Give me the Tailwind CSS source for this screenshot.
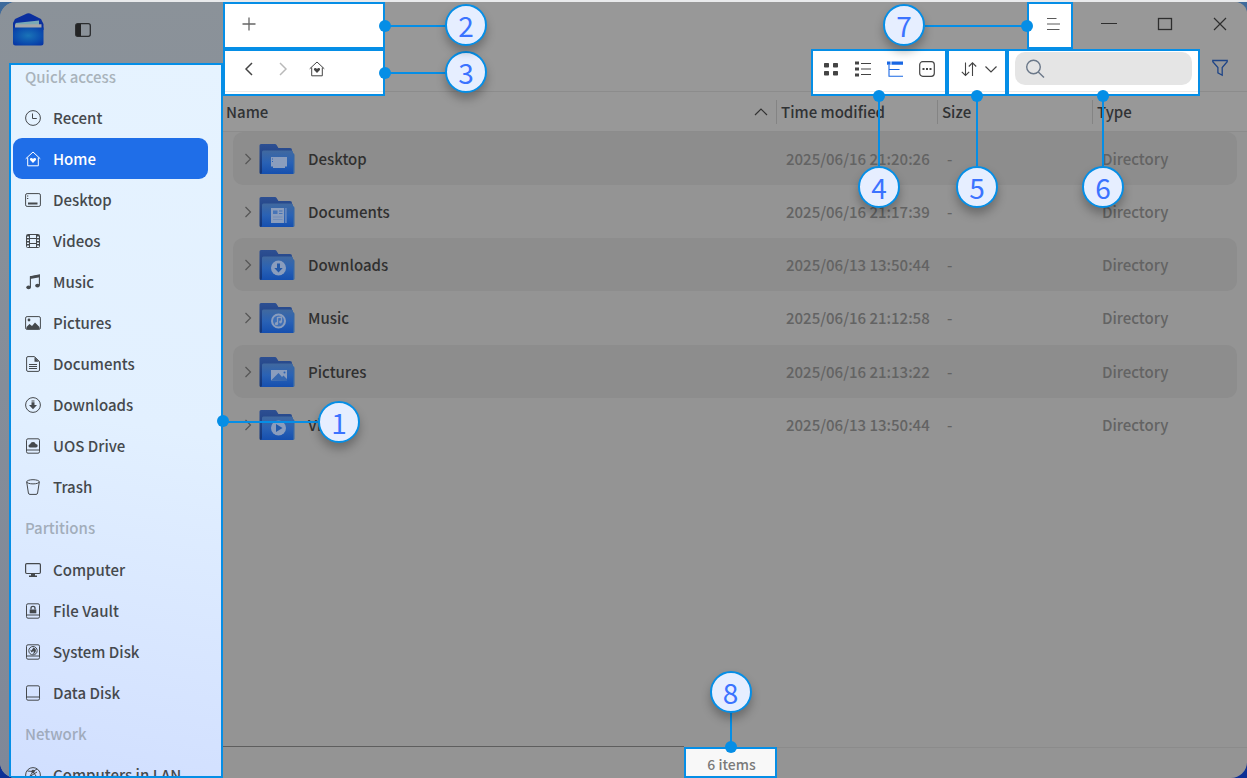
<!DOCTYPE html>
<html lang="en">
<head>
<meta charset="utf-8">
<title>File Manager</title>
<script src="https://cdn.jsdelivr.net/npm/@tailwindcss/browser@4"></script>
</head>
<body class="h-screen overflow-hidden border-t-2 border-[#e9eaec] bg-linear-to-b from-[#3f6b9c] to-[#0c2f96] font-['Noto_Sans_CJK_SC',sans-serif] text-[15px] leading-6 text-[#303234]">

<svg class="absolute size-0" aria-hidden="true">
  <symbol id="home" viewBox="0 0 16 16"><path d="M.7 7.800 8 1l7.300 6.800M2.700 6.500v8.300h10.600V6.500" fill="none" stroke="currentColor"/><path d="M8 11.900 5.300 9.300C4.400 8.300 5 7 6.200 7c.8 0 1.400.4 1.800 1 .4-.6 1-1 1.800-1 1.200 0 1.800 1.300.9 2.300z" fill="currentColor"/></symbol>
  <symbol id="chev" viewBox="0 0 10 14"><path d="m2.500 2 5 5-5 5" fill="none" stroke="currentColor" stroke-width="1.200"/></symbol>
  <symbol id="drive" viewBox="0 0 16 16"><rect x="1.500" y=".8" width="13" height="14.400" rx="1.500" fill="none" stroke="currentColor"/><path d="M1.500 12h13" stroke="currentColor"/></symbol>
  <linearGradient id="fb" x1="0" y1="0" x2="0" y2="1"><stop offset="0" stop-color="#2d4f92"/><stop offset="1" stop-color="#123579"/></linearGradient>
  <linearGradient id="ff" x1="0" y1="0" x2="0" y2="1"><stop offset="0" stop-color="#41699f"/><stop offset=".5" stop-color="#2a62b5"/><stop offset="1" stop-color="#154faf"/></linearGradient>
  <symbol id="folder" viewBox="0 0 36 32"><path d="M.5 2.500Q.5 1 2 1h14q1 0 1.600 1l1.800 3H31q2 0 2 2v24H2Q.5 31 .5 29.500z" fill="url(#fb)"/><path d="M30 10h3.500q2 0 2 2v17.500q0 1.500-1.500 1.500h-4z" fill="#3467a8"/><path d="M3 9q0-1.500 1.500-1.500h28Q34 7.500 34 9v22H2q1-.5 1-2z" fill="url(#ff)"/></symbol>
</svg>

<div class="flex h-full overflow-hidden rounded-2xl rounded-tr-xl bg-[#949494]">

  <!-- Sidebar -->
  <aside class="relative z-10 flex w-[223px] shrink-0 flex-col bg-linear-to-b from-[#8b9299] to-[#7f8898]">
    <header class="flex h-[61px] shrink-0 items-start gap-[30px] pt-2.5 pl-3">
      <svg class="h-[34px] w-8" viewBox="0 0 32 34">
        <defs><radialGradient id="lg" cx=".5" cy=".45" r=".7"><stop offset="0" stop-color="#1a74b8"/><stop offset=".6" stop-color="#0c4fae"/><stop offset="1" stop-color="#0733a3"/></radialGradient></defs>
        <path d="M1 11 3 7 15 1.500q1.500-.7 3 0L29 7l2.500 5v6H1z" fill="#0b2f9e"/>
        <path d="M3.500 11 27 8.500v5h-23z" fill="#79a9b5"/><path d="M3 12.300h26.500V18H3z" fill="#a5a7a8"/>
        <path d="M1 15.500h30.500V31q0 2.500-2.500 2.500H3.500Q1 33.500 1 31z" fill="url(#lg)"/>
      </svg>
      <button class="mt-2 h-5 w-5" aria-label="Toggle sidebar"><svg class="h-5 w-5" viewBox="0 0 20 20"><rect x="1.700" y="3.700" width="14.600" height="12.600" rx="2" fill="none" stroke="#2b2d2f" stroke-width="1.300"/><path d="M3 4h4v12H3q-1 0-1-1V5q0-1 1-1z" fill="#232425"/></svg></button>
    </header>
    <div class="relative ml-[9px] min-h-0 flex-1">
      <nav aria-label="Places" class="h-full overflow-hidden border-2 border-[#058ee6] bg-linear-190 from-[#e6f3ff] via-[#e2f0ff] via-50% to-[#d1dfff] pr-[13px] pl-0.5 font-medium text-[#45494d]">
        <h2 class="h-8 pl-3 text-[#a9b3bb]">Quick access</h2>
        <ul>
          <li><a href="#" class="flex h-[41px] items-center gap-3 rounded-[9px] pl-3"><svg class="h-4 w-4" viewBox="0 0 16 16" fill="none" stroke="currentColor"><circle cx="8" cy="8" r="7.400"/><path d="M7.500 3.500v5h4.300"/></svg>Recent</a></li>
          <li><a href="#" aria-current="page" class="flex h-[41px] items-center gap-3 rounded-[9px] bg-[#1f6ee8] pl-3 text-white"><svg class="h-4 w-4"><use href="#home"/></svg>Home</a></li>
          <li><a href="#" class="flex h-[41px] items-center gap-3 pl-3"><svg class="h-4 w-4" viewBox="0 0 16 16"><rect x=".6" y="1.600" width="14.800" height="12.800" rx="1.500" fill="none" stroke="currentColor"/><path d="M3 10.500h9.500v2H3zM2 3.500h1.300v1H2zM2 6h1.300v1H2z" fill="currentColor"/></svg>Desktop</a></li>
          <li><a href="#" class="flex h-[41px] items-center gap-3 pl-3"><svg class="h-4 w-4" viewBox="0 0 16 16" fill="none" stroke="currentColor"><rect x="1.500" y="1.500" width="13" height="13" rx="1"/><path d="M4.500 1.500v13M11.500 1.500v13M4.500 5.500h7M4.500 10.500h7"/><path d="M3 2v12M13 2v12" stroke-width="2" stroke-dasharray="1.500 1.500"/></svg>Videos</a></li>
          <li><a href="#" class="flex h-[41px] items-center gap-3 pl-3"><svg class="h-4 w-4" viewBox="0 0 16 16"><path d="M5.400 13V2.700l9-1.700v10.500" fill="none" stroke="currentColor" stroke-width="1.100"/><path d="m5 2.500 9.800-1.800v2.600L5 5z" fill="currentColor"/><ellipse cx="3.600" cy="13.300" rx="2.300" ry="1.900" fill="currentColor"/><ellipse cx="12.500" cy="11.600" rx="2.300" ry="1.900" fill="currentColor"/></svg>Music</a></li>
          <li><a href="#" class="flex h-[41px] items-center gap-3 pl-3"><svg class="h-4 w-4" viewBox="0 0 16 16"><rect x=".6" y="1.600" width="14.800" height="12.800" rx="1.500" fill="none" stroke="currentColor"/><path d="M1.500 14v-2l3-3 2.500 2L10 7.500l4.500 4.500v2z" fill="currentColor"/><circle cx="4" cy="5" r="1.400" fill="currentColor"/></svg>Pictures</a></li>
          <li><a href="#" class="flex h-[41px] items-center gap-3 pl-3"><svg class="h-4 w-4" viewBox="0 0 16 16"><path d="M3 .6h6.500l5 5V14q0 1.400-1.400 1.400H3q-1.400 0-1.400-1.400V2Q1.600.6 3 .6zM4 8.500h8M4 10.500h8M4 12.500h8" fill="none" stroke="currentColor"/><path d="M9.500 1 14 5.700H9.500z" fill="currentColor"/></svg>Documents</a></li>
          <li><a href="#" class="flex h-[41px] items-center gap-3 pl-3"><svg class="h-4 w-4" viewBox="0 0 16 16"><circle cx="8" cy="8" r="7.400" fill="none" stroke="currentColor"/><path d="M6.500 3.500h3v1h-3zM6.500 5.300h3V8H12l-4 4.200L4 8h2.500z" fill="currentColor"/></svg>Downloads</a></li>
          <li><a href="#" class="flex h-[41px] items-center gap-3 pl-3"><svg class="h-4 w-4" viewBox="0 0 16 16"><use href="#drive"/><path d="M5 9.500q-1.700-.2-1.500-2 .3-1 1.500-1.200Q6 3.800 8.200 4q2 .2 2.500 2 2 0 2 1.800-.1 1.500-1.700 1.700z" fill="currentColor"/></svg>UOS Drive</a></li>
          <li><a href="#" class="flex h-[41px] items-center gap-3 pl-3"><svg class="h-4 w-4" viewBox="0 0 16 16" fill="none" stroke="currentColor"><ellipse cx="8" cy="2.800" rx="6.300" ry="2.100"/><path d="m1.700 3 1.700 11q.2 1.400 1.600 1.400h6q1.400 0 1.600-1.400L14.300 3"/></svg>Trash</a></li>
        </ul>
        <h2 class="flex h-[42px] items-center pl-3 text-[#a2adba]">Partitions</h2>
        <ul>
          <li><a href="#" class="flex h-[41px] items-center gap-3 pl-3"><svg class="h-4 w-4" viewBox="0 0 16 16"><rect x=".6" y="1.600" width="14.800" height="9.900" rx="1.200" fill="none" stroke="currentColor" stroke-width="1.200"/><path d="M6 12h4v1.500h2V15H4v-1.500h2z" fill="currentColor"/></svg>Computer</a></li>
          <li><a href="#" class="flex h-[41px] items-center gap-3 pl-3"><svg class="h-4 w-4" viewBox="0 0 16 16"><use href="#drive"/><path d="M4.700 6.500h6.600v3.800H4.700z" fill="currentColor"/><path d="M6 6.500V5q0-1.700 2-1.700T10 5v1.500" fill="none" stroke="currentColor" stroke-width="1.300"/></svg>File Vault</a></li>
          <li><a href="#" class="flex h-[41px] items-center gap-3 pl-3"><svg class="h-4 w-4" viewBox="0 0 16 16"><use href="#drive"/><circle cx="8" cy="6.700" r="4.200" fill="none" stroke="currentColor"/><path d="M8.500 3.500q3 1 2.300 4Q10 10 7.500 10q2-1.500 1-3l-2 1.500L5 5.500l1.500 1z" fill="currentColor"/></svg>System Disk</a></li>
          <li><a href="#" class="flex h-[41px] items-center gap-3 pl-3"><svg class="h-4 w-4"><use href="#drive"/></svg>Data Disk</a></li>
        </ul>
        <h2 class="flex h-[41px] items-center pl-3 text-[#a0abbc]">Network</h2>
        <ul>
          <li><a href="#" class="flex h-[41px] items-center gap-3 pl-3 whitespace-nowrap"><svg class="h-4 w-4" viewBox="0 0 16 16" fill="none" stroke="currentColor"><circle cx="8" cy="8" r="7.400"/><path d="M8 4.500 3 12M8 4.500l5 7.500M2.500 4 8 4.500 12 2M4 10l8-5"/><circle cx="8" cy="4.500" r="1.300" fill="currentColor"/></svg>Computers in LAN</a></li>
        </ul>
      </nav>
      <!-- Callout 1 -->
      <span class="absolute top-1/2 right-0 h-0.5 w-0 bg-[#058ee6]">
        <span class="absolute top-0 left-0 h-0.5 w-24 bg-[#058ee6]"></span>
        <span class="absolute -top-1.5 -left-1.5 size-3 rounded-full bg-[#058ee6]"></span>
        <span class="absolute -top-5 left-[95px] flex size-[42px] items-center justify-center rounded-full border-2 border-[#058ee6] bg-[#e6eeff] text-[28px] text-[#3b73ff] shadow-[0_6px_10px_#0004]">1</span>
      </span>
    </div>
  </aside>

  <main class="flex min-w-0 flex-1 flex-col">
    <!-- Title bar -->
    <div class="relative z-20 flex h-[47px] shrink-0 bg-[#989898]">
      <div class="relative flex h-[47px] w-[162px] items-center border-2 border-[#058ee6] bg-white pb-1 pl-3">
        <button aria-label="New tab" class="flex h-8 w-6 items-center justify-center"><svg class="size-4" viewBox="0 0 16 16"><path d="M8 1.500v13M1.500 8h13" stroke="#666" stroke-width="1.300"/></svg></button>
        <span class="absolute top-1/2 -right-1.5 h-0.5 w-[66px] translate-x-full -translate-y-1/2 bg-[#058ee6]"></span>
        <span class="absolute top-1/2 -right-2 size-3 -translate-y-1/2 rounded-full bg-[#058ee6]"></span>
        <span class="absolute top-0 left-[220px] flex size-[42px] items-center justify-center rounded-full border-2 border-[#058ee6] bg-[#e6eeff] text-[28px] text-[#3b73ff] shadow-[0_6px_10px_#0004]">2</span>
      </div>
      <div class="flex-1"></div>
      <div class="relative flex w-[46px] items-center justify-center border-2 border-[#058ee6] bg-white pb-1 pl-1.5">
        <button aria-label="Menu" class="flex size-8 items-center justify-center"><svg class="size-4" viewBox="0 0 16 16"><path d="M2 2.500h9.500M2 8h13M2 13.500h12.500" stroke="#5a5a5a"/></svg></button>
        <span class="absolute top-1/2 right-[42px] h-0.5 w-[104px] -translate-y-1/2 bg-[#058ee6]"></span>
        <span class="absolute top-1/2 -left-2 size-3 -translate-y-1/2 rounded-full bg-[#058ee6]"></span>
        <span class="absolute top-0 right-[146px] flex size-[42px] items-center justify-center rounded-full border-2 border-[#058ee6] bg-[#e6eeff] text-[28px] text-[#3b73ff] shadow-[0_6px_10px_#0004]">7</span>
      </div>
      <div class="flex items-center pb-1 pl-2 text-[#2e2e2e]">
        <button aria-label="Minimize" class="flex h-8 w-14 items-center justify-center"><svg class="size-4" viewBox="0 0 16 16"><path d="M0 7.500h16" stroke="currentColor"/></svg></button>
        <button aria-label="Maximize" class="flex h-8 w-[55px] items-center justify-center"><svg class="size-4" viewBox="0 0 16 16"><rect x="1.500" y="2.500" width="13" height="11" fill="none" stroke="currentColor" stroke-width="1.300"/></svg></button>
        <button aria-label="Close" class="flex h-8 w-[55px] items-center justify-center"><svg class="size-4" viewBox="0 0 16 16"><path d="m2 2 12 12M14 2 2 14" stroke="currentColor" stroke-width="1.200"/></svg></button>
      </div>
    </div>

    <!-- Toolbar -->
    <div class="relative z-10 flex h-[42px] shrink-0 bg-[#989898]">
      <div class="relative h-[47px] w-[162px] border-2 border-[#058ee6] bg-white text-[#444]">
        <div class="flex h-[41px] items-center border-b border-[#ececec] pb-1 pl-[7px]">
          <button aria-label="Back" class="flex h-8 w-[34px] items-center justify-center"><svg class="h-[18px] w-3 rotate-180"><use href="#chev"/></svg></button>
          <button aria-label="Forward" class="flex h-8 w-[34px] items-center justify-center text-[#b9b9b9]"><svg class="h-[18px] w-3"><use href="#chev"/></svg></button>
          <button aria-label="Home" class="flex h-8 w-[34px] items-center justify-center"><svg class="size-4"><use href="#home"/></svg></button>
        </div>
        <span class="absolute top-1/2 -right-1.5 h-0.5 w-[66px] translate-x-full -translate-y-1/2 bg-[#058ee6]"></span>
        <span class="absolute top-1/2 -right-2 size-3 -translate-y-1/2 rounded-full bg-[#058ee6]"></span>
        <span class="absolute top-0 left-[220px] flex size-[42px] items-center justify-center rounded-full border-2 border-[#058ee6] bg-[#e6eeff] text-[28px] text-[#3b73ff] shadow-[0_6px_10px_#0004]">3</span>
      </div>
      <div class="flex-1"></div>
      <div class="relative h-[47px] w-[136px] border-2 border-[#058ee6] bg-white text-[#444]">
        <div class="flex h-[41px] items-center border-b border-[#ececec] px-0.5 pb-1">
          <button aria-label="Icon view" class="flex size-8 items-center justify-center"><svg class="size-4" viewBox="0 0 16 16" fill="currentColor"><rect x="1" y="2" width="5" height="4.500" rx=".8"/><rect x="10" y="2" width="5" height="4.500" rx=".8"/><rect x="1" y="10" width="5" height="4.500" rx=".8"/><rect x="10" y="10" width="5" height="4.500" rx=".8"/></svg></button>
          <button aria-label="List view" class="flex size-8 items-center justify-center"><svg class="size-4" viewBox="0 0 16 16"><path d="M0 .5h4v3H0zM0 6.500h4v3H0zM0 12.500h4v3H0z" fill="currentColor"/><path d="M6 2.500h10M6 8h10M6 13.500h10" stroke="currentColor" stroke-width="1.100"/></svg></button>
          <button aria-label="Tree view" aria-pressed="true" class="flex size-8 items-center justify-center text-[#1a68e4]"><svg class="size-4" viewBox="0 0 16 16"><path d="M0 .5h3.500v3.200H0zM4.500.5H16v3.200H4.500z" fill="currentColor"/><path d="M2 4v11.300h14M2 8.500h10.500" fill="none" stroke="currentColor" stroke-width="1.100"/></svg></button>
          <button aria-label="View options" class="flex size-8 items-center justify-center"><svg class="size-4" viewBox="0 0 16 16"><rect x=".7" y=".7" width="14.600" height="14.600" rx="3" fill="none" stroke="currentColor" stroke-width="1.200"/><path d="M3.500 7h2v2h-2zM7 7h2v2H7zM10.500 7h2v2h-2z" fill="currentColor"/></svg></button>
        </div>
        <span class="absolute top-[45px] left-[66px] h-[70px] w-0.5 -translate-x-1/2 bg-[#058ee6]"></span>
        <span class="absolute top-[39px] left-[66px] size-3 -translate-x-1/2 rounded-full bg-[#058ee6]"></span>
        <span class="absolute top-[115px] left-[66px] flex size-[42px] -translate-x-1/2 items-center justify-center rounded-full border-2 border-[#058ee6] bg-[#e6eeff] text-[28px] text-[#3b73ff] shadow-[0_6px_10px_#0004]">4</span>
      </div>
      <div class="relative h-[47px] w-[60px] border-2 border-[#058ee6] bg-white text-[#444]">
        <div class="h-[41px] border-b border-[#ececec]">
          <button aria-label="Sort" class="flex h-9 w-full items-center justify-center gap-2 pl-1"><svg class="size-4" viewBox="0 0 16 16" fill="none" stroke="currentColor" stroke-width="1.100"><path d="M4.500 1.500v13M.8 10.800l3.700 3.700 3.700-3.700M11.500 15V2M7.800 5.500l3.700-3.700 3.700 3.700"/></svg><svg class="h-4 w-3" viewBox="0 0 12 16"><path d="m.5 5.500 5.500 5.500 5.500-5.500" fill="none" stroke="currentColor" stroke-width="1.200"/></svg></button>
        </div>
        <span class="absolute top-[45px] left-[28px] h-[70px] w-0.5 -translate-x-1/2 bg-[#058ee6]"></span>
        <span class="absolute top-[39px] left-[28px] size-3 -translate-x-1/2 rounded-full bg-[#058ee6]"></span>
        <span class="absolute top-[115px] left-[28px] flex size-[42px] -translate-x-1/2 items-center justify-center rounded-full border-2 border-[#058ee6] bg-[#e6eeff] text-[28px] text-[#3b73ff] shadow-[0_6px_10px_#0004]">5</span>
      </div>
      <div class="relative h-[47px] w-[193px] border-2 border-[#058ee6] bg-white">
        <div class="h-[41px] border-b border-[#ececec] px-1.5 pt-px">
          <label class="flex h-[33px] items-center rounded-[10px] bg-[#e5e5e5] pl-2.5">
            <svg class="size-5 shrink-0" viewBox="0 0 20 20" fill="none" stroke="#6b7889" stroke-width="1.400"><circle cx="8.500" cy="8" r="6.800"/><path d="m13.300 13 5.700 5.500"/></svg>
            <input type="search" aria-label="Search" class="w-full min-w-0 bg-transparent pl-2 outline-none">
          </label>
        </div>
        <span class="absolute top-[45px] left-[94px] h-[70px] w-0.5 -translate-x-1/2 bg-[#058ee6]"></span>
        <span class="absolute top-[39px] left-[94px] size-3 -translate-x-1/2 rounded-full bg-[#058ee6]"></span>
        <span class="absolute top-[115px] left-[94px] flex size-[42px] -translate-x-1/2 items-center justify-center rounded-full border-2 border-[#058ee6] bg-[#e6eeff] text-[28px] text-[#3b73ff] shadow-[0_6px_10px_#0004]">6</span>
      </div>
      <button aria-label="Filter" class="flex w-[47px] items-center justify-center pr-[7px] pb-1"><svg class="h-[18px] w-4" viewBox="0 0 16 18"><path d="M.8 1.500h14.400v1.300l-5 5.700v7.700l-4.300-2.300V8.500L.8 2.800z" fill="none" stroke="#1f4587" stroke-width="1.300"/></svg></button>
    </div>

    <!-- File list -->
    <div class="min-h-0 flex-1">
      <table class="block w-full text-left font-medium">
        <thead class="block border-y border-[#8c8c8c] bg-[#989898]">
          <tr class="grid h-[39px] grid-cols-[1fr_161px_155px_155px] items-center">
            <th scope="col" class="flex items-center justify-between pr-2 pl-[3px] font-medium">Name<svg class="h-2 w-3.5" viewBox="0 0 14 8"><path d="m1 7 6-6 6 6" fill="none" stroke="#333" stroke-width="1.200"/></svg></th>
            <th scope="col" class="border-l border-[#848484] pl-1 font-medium">Time modified</th>
            <th scope="col" class="border-l border-[#848484] pl-1 font-medium">Size</th>
            <th scope="col" class="border-l border-[#848484] pl-1 font-medium">Type</th>
          </tr>
        </thead>
        <tbody class="block px-2.5 text-[#636363]">
          <tr class="grid h-[53px] grid-cols-[1fr_161px_155px_145px] items-center rounded-[10px] bg-[#8d8d8d]">
            <td class="flex items-center pl-2.5 text-[#303030]"><svg class="mr-1.5 h-[14px] w-2.5 text-[#555]"><use href="#chev"/></svg><svg class="mr-[13px] h-8 w-9" viewBox="0 0 36 32"><use href="#folder"/><path d="M12 14h16v9.500h-2V25H14v-1.500h-2z" fill="#8a9dbd"/><path d="M13 15.500h1v1h-1zM13 18h1v1h-1z" fill="#2a62b5"/></svg>Desktop</td>
            <td class="pl-2.5">2025/06/16 21:20:26</td><td class="pl-2.5">-</td><td class="pl-2.5">Directory</td>
          </tr>
          <tr class="grid h-[53px] grid-cols-[1fr_161px_155px_145px] items-center">
            <td class="flex items-center pl-2.5 text-[#303030]"><svg class="mr-1.5 h-[14px] w-2.5 text-[#555]"><use href="#chev"/></svg><svg class="mr-[13px] h-8 w-9" viewBox="0 0 36 32"><use href="#folder"/><path d="M12 12h13v15H12z" fill="#8a9dbd"/><path d="M25.800 12h2v15h-2z" fill="#5f83bd"/><path d="M14 14.500h4.500V18H14zM20 14.500h3.500v1H20zM20 17h3.500v1H20z" fill="#2a62b5" opacity=".7"/><path d="M14 20.500h9.500v1H14zM14 23h9.500v1H14z" fill="#2a62b5" opacity=".25"/></svg>Documents</td>
            <td class="pl-2.5">2025/06/16 21:17:39</td><td class="pl-2.5">-</td><td class="pl-2.5">Directory</td>
          </tr>
          <tr class="grid h-[53px] grid-cols-[1fr_161px_155px_145px] items-center rounded-[10px] bg-[#8d8d8d]">
            <td class="flex items-center pl-2.5 text-[#303030]"><svg class="mr-1.5 h-[14px] w-2.5 text-[#555]"><use href="#chev"/></svg><svg class="mr-[13px] h-8 w-9" viewBox="0 0 36 32"><use href="#folder"/><circle cx="19.500" cy="19" r="7.500" fill="#8a9dbd"/><path d="M18 14.500h3V19h2.700l-4.200 4.500-4.200-4.500H18z" fill="#2459a8"/></svg>Downloads</td>
            <td class="pl-2.5">2025/06/13 13:50:44</td><td class="pl-2.5">-</td><td class="pl-2.5">Directory</td>
          </tr>
          <tr class="grid h-[54px] grid-cols-[1fr_161px_155px_145px] items-center">
            <td class="flex items-center pl-2.5 text-[#303030]"><svg class="mr-1.5 h-[14px] w-2.5 text-[#555]"><use href="#chev"/></svg><svg class="mr-[13px] h-8 w-9" viewBox="0 0 36 32"><use href="#folder"/><circle cx="19.500" cy="19" r="6.500" fill="#3d6fb8" stroke="#8a9dbd" stroke-width="2"/><path d="M18.500 22v-6.500l4-.5v5" fill="none" stroke="#8a9dbd" stroke-width="1.300"/><circle cx="17.500" cy="21.700" r="1.600" fill="#8a9dbd"/><circle cx="21.500" cy="20" r="1.400" fill="#8a9dbd"/></svg>Music</td>
            <td class="pl-2.5">2025/06/16 21:12:58</td><td class="pl-2.5">-</td><td class="pl-2.5">Directory</td>
          </tr>
          <tr class="grid h-[53px] grid-cols-[1fr_161px_155px_145px] items-center rounded-[10px] bg-[#8d8d8d]">
            <td class="flex items-center pl-2.5 text-[#303030]"><svg class="mr-1.5 h-[14px] w-2.5 text-[#555]"><use href="#chev"/></svg><svg class="mr-[13px] h-8 w-9" viewBox="0 0 36 32"><use href="#folder"/><path d="M12 14h16v10.500H12z" fill="#8a9dbd"/><path d="m12 24.500 7.500-7.500 3.500 4 1.500-1.500 3.500 3.500v2z" fill="#3768b0"/><circle cx="25.500" cy="16.500" r="1" fill="#2a62b5"/></svg>Pictures</td>
            <td class="pl-2.5">2025/06/16 21:13:22</td><td class="pl-2.5">-</td><td class="pl-2.5">Directory</td>
          </tr>
          <tr class="grid h-[53px] grid-cols-[1fr_161px_155px_145px] items-center">
            <td class="flex items-center pl-2.5 text-[#303030]"><svg class="mr-1.5 h-[14px] w-2.5 text-[#555]"><use href="#chev"/></svg><svg class="mr-[13px] h-8 w-9" viewBox="0 0 36 32"><use href="#folder"/><circle cx="19.500" cy="19" r="7.500" fill="#8a9dbd"/><path d="m17 15 6.500 4-6.500 4z" fill="#2459a8"/></svg>Videos</td>
            <td class="pl-2.5">2025/06/13 13:50:44</td><td class="pl-2.5">-</td><td class="pl-2.5">Directory</td>
          </tr>
        </tbody>
      </table>
    </div>

    <!-- Status bar -->
    <footer class="grid h-8 shrink-0 grid-cols-[461fr_93px_470fr]">
      <div class="border-t border-[#5e5e5e]"></div>
      <div class="relative mt-px flex items-center justify-center border-2 border-[#058ee6] bg-[#f8f8f8] pt-0.5 pl-0.5 text-sm font-medium text-[#7a7a7a]">6 items
        <span class="absolute -top-[36px] left-1/2 h-[34px] w-0.5 -translate-x-1/2 bg-[#058ee6]"></span>
        <span class="absolute -top-2 left-1/2 size-3 -translate-x-1/2 rounded-full bg-[#058ee6]"></span>
        <span class="absolute -top-[78px] left-1/2 flex size-[42px] -translate-x-1/2 items-center justify-center rounded-full border-2 border-[#058ee6] bg-[#e6eeff] text-[28px] font-normal text-[#3b73ff] shadow-[0_6px_10px_#0004]">8</span>
      </div>
      <div class="mt-px border-t border-[#8b8b8b]"></div>
    </footer>
  </main>
</div>
</body>
</html>
